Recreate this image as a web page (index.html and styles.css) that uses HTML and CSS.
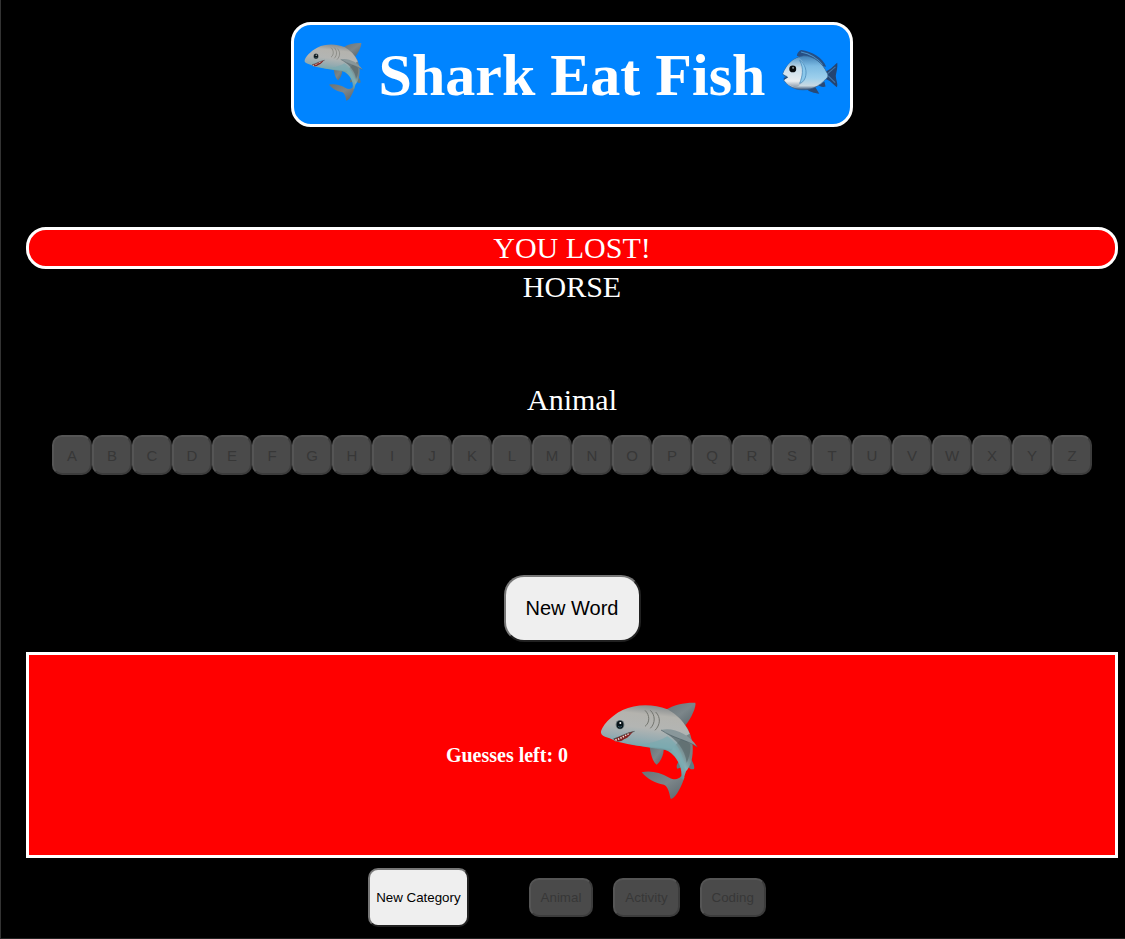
FILE: index.html
```html
<!DOCTYPE html>
<html lang="en">
<head>
<meta charset="utf-8">
<meta name="viewport" content="width=device-width, initial-scale=1">
<title>Shark Eat Fish</title>
<link rel="stylesheet" href="styles.css">
</head>
<body>
<svg class="defs" aria-hidden="true">
  <defs>
    <linearGradient id="skin" gradientUnits="userSpaceOnUse" x1="150" y1="45" x2="135" y2="180">
      <stop offset="0" stop-color="#8b8f90"/><stop offset=".2" stop-color="#b4b3ae"/><stop offset=".5" stop-color="#b3b5b3"/><stop offset=".72" stop-color="#98acb1"/><stop offset=".88" stop-color="#7ea8ae"/><stop offset="1" stop-color="#54777d"/>
    </linearGradient>
    <linearGradient id="rear" gradientUnits="userSpaceOnUse" x1="232" y1="200" x2="310" y2="150">
      <stop offset="0" stop-color="#5f9299"/><stop offset=".3" stop-color="#86b0b5"/><stop offset=".6" stop-color="#758385"/><stop offset="1" stop-color="#7c8384"/>
    </linearGradient>
    <linearGradient id="fin" x1="0" y1="0" x2="1" y2="1">
      <stop offset="0" stop-color="#6b7478"/><stop offset=".5" stop-color="#7c868a"/><stop offset="1" stop-color="#59646a"/>
    </linearGradient>
    <linearGradient id="scales" x1="0" y1="0" x2="0" y2="1">
      <stop offset="0" stop-color="#3f7fb5"/><stop offset=".3" stop-color="#7dbbe3"/><stop offset=".65" stop-color="#9ccfec"/><stop offset=".88" stop-color="#c9d9e2"/><stop offset="1" stop-color="#344d70"/>
    </linearGradient>
    <linearGradient id="face" x1="0" y1="0" x2="0" y2="1">
      <stop offset="0" stop-color="#5b9bcc"/><stop offset=".35" stop-color="#c6dcea"/><stop offset=".8" stop-color="#e9edf0"/><stop offset="1" stop-color="#8d9cad"/>
    </linearGradient>
    <symbol id="shark" viewBox="30 34 300 300">
      <path fill="url(#fin)" d="M228 60C250 45 285 38 316 39C320 48 304 86 287 106Z"/>
      <path fill="url(#fin)" d="M179 170C182 196 189 218 200 225C213 215 222 193 221 175Z"/>
      <path fill="#607a80" d="M268 215C260 222 258 231 262 237L275 233ZM303 208C309 219 315 230 312 238C305 240 299 238 295 231Z"/>
      <path fill="url(#fin)" d="M155 248C178 242 209 247 238 264C253 272 267 269 273 260L284 262C276 285 260 324 243 328C239 326 239 292 222 285C195 282 170 266 155 248Z"/>
      <path fill="url(#rear)" d="M195 100L232 59C275 82 305 121 308 169C310 203 302 230 288 245L280 270L273 266C277 247 271 226 259 208C247 190 231 179 205 175Z"/>
      <path fill="url(#skin)" d="M33 130C32 112 63 78 98 61C138 42 190 42 232 59C262 75 285 99 299 132C281 142 262 155 243 184C185 175 120 166 76 155C67 145 35 143 33 130Z"/>
      <path fill="#7aaab1" opacity=".65" d="M120 163C170 169 208 154 232 140C259 158 278 190 283 227C284 237 281 248 278 257C276 225 256 184 216 176C180 172 145 170 120 163Z"/>
      <path fill="#5c6b6e" opacity=".75" d="M226 130C262 142 292 154 301 164C303 182 297 207 290 219C286 180 259 149 226 130Z"/>
      <path fill="#89979a" d="M213 121C247 111 298 132 322 172C291 151 248 144 213 121Z"/>
      <path fill="none" stroke="#4e6167" stroke-width="2" d="M213 121C248 145 291 151 322 172"/>
      <path fill="none" stroke="#73756f" stroke-width="3" d="M165 62C180 76 180 99 165 110M181 62C196 76 197 100 181 116M197 67C213 83 211 106 195 122"/>
      <path fill="#832222" d="M71 148C91 142 108 130 132 125C123 130 117 145 102 149C91 158 77 158 71 148Z"/>
      <path fill="none" stroke="#efe7df" stroke-width="5" stroke-dasharray="4 4" d="M76 151C94 147 105 136 120 131"/>
      <path fill="none" stroke="#3d4a4c" stroke-width="2" d="M70 148C91 142 108 129 134 125"/>
      <ellipse cx="90" cy="105" rx="13" ry="14" fill="#637174"/>
      <ellipse cx="90" cy="105" rx="10" ry="12" fill="#071217"/>
      <path fill="none" stroke="#385c67" stroke-width="3" d="M84 110Q90 116 96 109"/>
      <circle cx="91" cy="100" r="3" fill="#fff"/>
    </symbol>
    <symbol id="fish" viewBox="13 -6 174 174">
      <path fill="#264f84" d="M62 34C62 25 70 18 75 17C105 22 137 38 147 66L120 62Z"/>
      <path fill="none" stroke="#4d91c7" stroke-width="3" d="M74 23C99 28 122 42 136 60"/>
      <path fill="#294976" d="M90 126L113 121L127 144C112 142 96 137 90 130ZM122 118L142 109L145 123C137 126 128 123 122 118Z"/>
      <path fill="#244471" d="M142 80C157 77 167 64 179 54C181 73 174 87 175 95C176 107 182 117 178 125C166 116 157 103 144 101Z"/>
      <path fill="none" stroke="#4377aa" stroke-width="3" d="M151 86L174 66M153 92L173 112"/>
      <path fill="url(#scales)" stroke="#355e8c" stroke-width="2" d="M21 87C32 60 52 38 82 34C111 33 138 57 149 83C153 88 154 96 146 101C127 124 98 136 69 132C49 129 32 118 24 104L32 98Z"/>
      <path fill="url(#face)" d="M22 87C32 61 48 43 68 39C91 57 94 101 73 116C67 123 60 126 52 124C39 119 30 111 25 104L35 98L34 92Z"/>
      <path fill="#8bc8eb" stroke="#3f80b3" stroke-width="2" d="M70 47C85 56 93 79 86 98C82 108 76 113 70 114C78 93 83 71 70 47Z"/>
      <path fill="#294d78" d="M20 87L37 96L24 104L24 98L31 96Z"/>
      <circle cx="50" cy="72" r="10" fill="#080b0e"/>
      <circle cx="51" cy="69" r="3" fill="#7e878c"/>
    </symbol>
  </defs>
</svg>
<main class="game">
  <h1 class="title">
    <svg class="title-icon" role="img" aria-label="Shark"><use href="#shark"/></svg>
    <span>Shark Eat Fish</span>
    <svg class="title-icon" role="img" aria-label="Fish"><use href="#fish"/></svg>
  </h1>
  <div class="result">YOU LOST!</div>
  <div class="word">HORSE</div>
  <div class="category">Animal</div>
  <div class="keys">
    <button class="key" disabled>A</button><button class="key" disabled>B</button><button class="key" disabled>C</button><button class="key" disabled>D</button><button class="key" disabled>E</button><button class="key" disabled>F</button><button class="key" disabled>G</button><button class="key" disabled>H</button><button class="key" disabled>I</button><button class="key" disabled>J</button><button class="key" disabled>K</button><button class="key" disabled>L</button><button class="key" disabled>M</button><button class="key" disabled>N</button><button class="key" disabled>O</button><button class="key" disabled>P</button><button class="key" disabled>Q</button><button class="key" disabled>R</button><button class="key" disabled>S</button><button class="key" disabled>T</button><button class="key" disabled>U</button><button class="key" disabled>V</button><button class="key" disabled>W</button><button class="key" disabled>X</button><button class="key" disabled>Y</button><button class="key" disabled>Z</button>
  </div>
  <button class="new-word">New Word</button>
  <section class="status">
    <h2 class="guesses">Guesses left: 0</h2>
    <svg class="status-shark" role="img" aria-label="Shark"><use href="#shark"/></svg>
  </section>
  <div class="categories">
    <button class="new-category">New Category</button>
    <button class="choice" disabled>Animal</button>
    <button class="choice" disabled>Activity</button>
    <button class="choice" disabled>Coding</button>
  </div>
</main>
</body>
</html>
```
FILE: styles.css
```css
* { box-sizing: border-box; }

html { background: #000; }

body {
  margin: 0;
  min-height: 100vh;
  border-left: 1px solid #333;
  border-bottom: 1px solid #222;
  background: #000;
  color: #fff;
  font-family: "Liberation Serif", "Times New Roman", serif;
}

.defs { position: absolute; width: 0; height: 0; }

.game {
  display: flex;
  flex-direction: column;
  align-items: center;
  padding: 22px 7px 10px 25px;
}

.title {
  display: flex;
  align-items: center;
  gap: 15px;
  margin: 0 0 100px;
  padding: 16px 10px 14px;
  border: 3px solid #fff;
  border-radius: 20px;
  background: #0084ff;
  font-size: 60px;
  line-height: 69px;
}

.title-icon { width: 60px; height: 60px; margin-bottom: 8px; }

.result {
  align-self: stretch;
  border: 3px solid #fff;
  border-radius: 20px;
  background: #f00;
  font-size: 30px;
  line-height: 36px;
  text-align: center;
}

.word, .category { font-size: 30px; line-height: 36px; }

.category { margin-top: 77px; }

button {
  font-family: "Liberation Sans", Arial, sans-serif;
  border: 2px solid;
  border-color: #767676 #212121 #212121 #767676;
  background: #efefef;
  color: #000;
}

.key, .choice {
  border-color: #555 #3c3c3c #3c3c3c #555;
  border-radius: 10px;
  background: #4a4a4a;
  color: #373737;
}

.keys {
  display: flex;
  flex-wrap: wrap;
  justify-content: center;
  margin: 17px 0 100px;
}

.key {
  width: 40px;
  height: 40px;
  padding: 0;
  font-size: 15px;
}

.new-word {
  padding: 20px;
  border-radius: 20px;
  font-size: 20px;
  line-height: 23px;
}

.status {
  display: flex;
  align-self: stretch;
  align-items: center;
  justify-content: center;
  gap: 32px;
  margin: 10px 0;
  padding: 46px 0 54px 2px;
  border: 3px solid #fff;
  background: #f00;
}

.guesses {
  margin: 0;
  padding-top: 8px;
  font-size: 20px;
  line-height: 23px;
}

.status-shark { width: 100px; height: 100px; }

.categories { display: flex; align-items: center; padding-right: 10px; }

.new-category {
  margin-right: 60px;
  padding: 20px 6px;
  border-radius: 10px;
}

.choice { padding: 10px; }

.choice + .choice { margin-left: 20px; }
```
